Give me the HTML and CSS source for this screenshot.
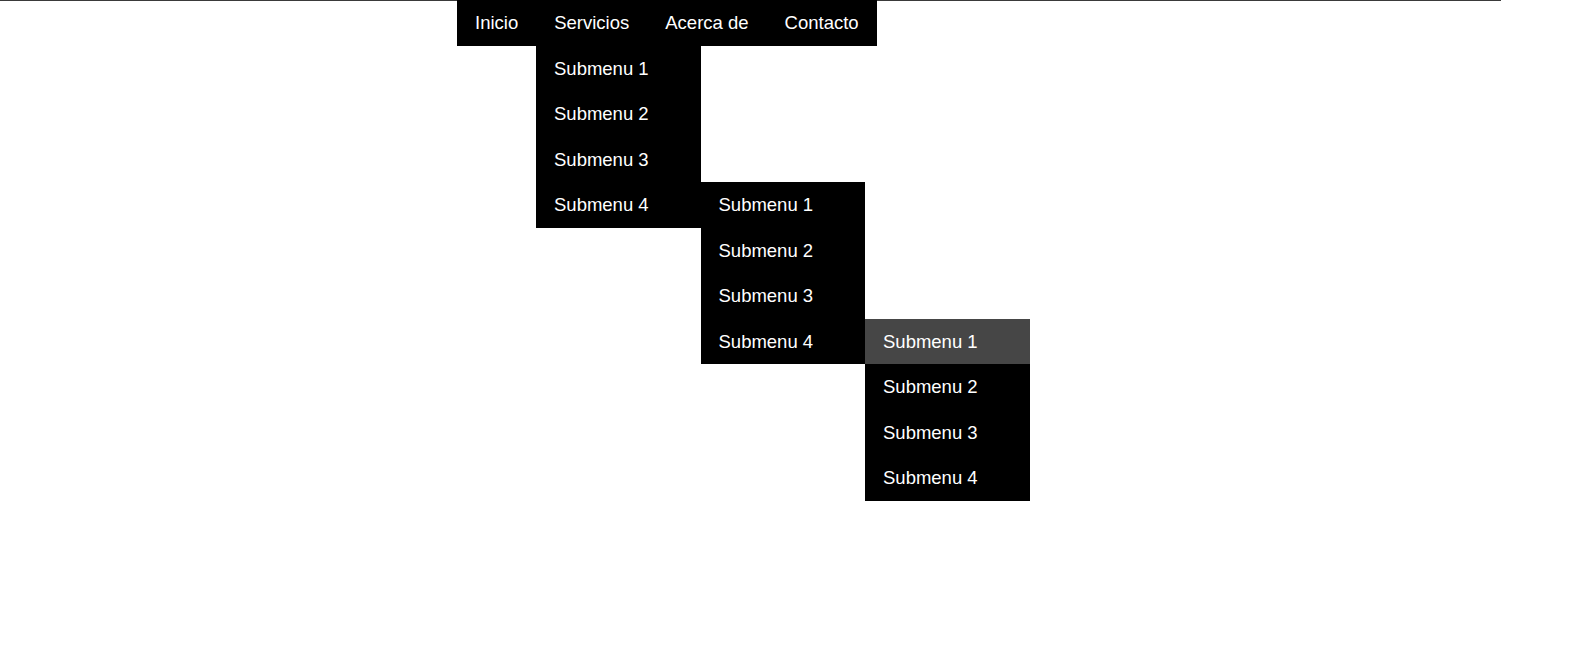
FILE: index.html
```html
<!DOCTYPE html>
<html lang="es">
<head>
<meta charset="utf-8">
<title>Menú</title>
<link rel="stylesheet" href="styles.css">
</head>
<body>
<header class="topbar">
  <div class="navwrap">
    <div class="menu">
      <a class="link" href="#">Inicio</a>
      <a class="link" href="#">Servicios</a>
      <a class="link" href="#">Acerca de</a>
      <a class="link" href="#">Contacto</a>
    </div>
    <div class="stairs">
      <div class="panel p1">
        <a class="sublink" href="#">Submenu 1</a>
        <a class="sublink" href="#">Submenu 2</a>
        <a class="sublink" href="#">Submenu 3</a>
        <a class="sublink" href="#">Submenu 4</a>
      </div>
      <div class="panel p2">
        <a class="sublink" href="#">Submenu 1</a>
        <a class="sublink" href="#">Submenu 2</a>
        <a class="sublink" href="#">Submenu 3</a>
        <a class="sublink" href="#">Submenu 4</a>
      </div>
      <div class="panel p3">
        <a class="sublink active" href="#">Submenu 1</a>
        <a class="sublink" href="#">Submenu 2</a>
        <a class="sublink" href="#">Submenu 3</a>
        <a class="sublink" href="#">Submenu 4</a>
      </div>
    </div>
  </div>
</header>
</body>
</html>
```
FILE: styles.css
```css
* {
  box-sizing: border-box;
}

html, body {
  margin: 0;
  padding: 0;
  background: #ffffff;
}

body {
  font-family: "Liberation Sans", Arial, sans-serif;
  font-size: 18.5px;
  color: #ffffff;
}

.topbar {
  width: 1501px;
  border-top: 1px solid #3a3a3a;
  padding-left: 457px;
}

.navwrap {
  margin-top: -1px;
  display: flex;
  flex-direction: column;
  align-items: flex-start;
}

.menu {
  display: flex;
  background: #000000;
}

.link {
  display: block;
  padding: 12px 18px;
  line-height: 21.5px;
  color: #ffffff;
  text-decoration: none;
  white-space: nowrap;
}

.stairs {
  display: flex;
  align-items: flex-start;
  padding-left: 79px;
}

.panel {
  display: flex;
  flex-direction: column;
  width: 164.5px;
  background: #000000;
}

.p2 {
  margin-top: 136.5px;
}

.p3 {
  margin-top: 273px;
}

.sublink {
  display: block;
  padding: 12px 18px;
  line-height: 21.5px;
  color: #ffffff;
  text-decoration: none;
  white-space: nowrap;
}

.sublink.active {
  background: #464646;
}
```
